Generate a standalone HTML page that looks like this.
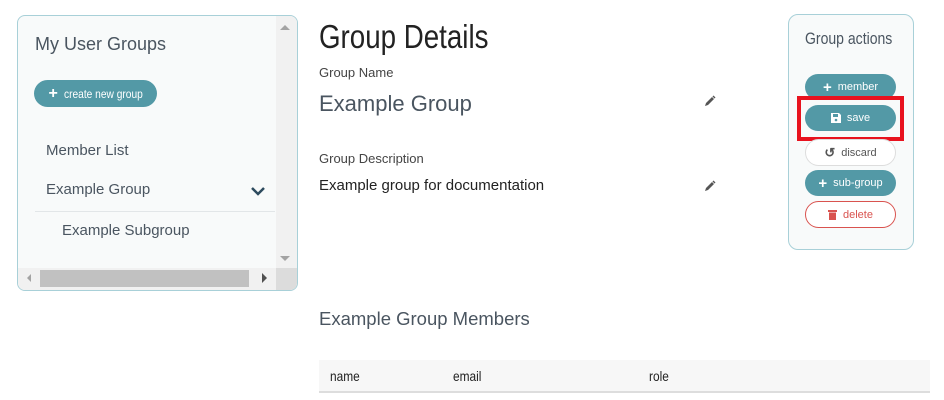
<!DOCTYPE html>
<html><head><style>
body{margin:0;width:944px;height:400px;background:#fff;font-family:"Liberation Sans",sans-serif;position:relative;overflow:hidden;color:#333}
.a{position:absolute;white-space:nowrap}
.panel{position:absolute;left:17px;top:15px;width:279px;height:274px;border:1px solid #a8d0d8;border-radius:8px;background:#f8fafa;overflow:hidden}
.btn{position:absolute;background:#5399a6;color:#fff;border-radius:14px;font-size:11px;display:flex;align-items:center;justify-content:center;gap:6px}
.nar{display:inline-block;transform:scaleX(.85);transform-origin:left center}
</style></head><body>
<div class="panel">
  <div class="a" style="left:17px;top:18px;font-size:18px;color:#4a5560">My User Groups</div>
  <div class="btn" style="left:16px;top:64px;width:123px;height:27px;border-radius:14px"><span style="font-size:16px;font-weight:bold">+</span><span class="nar" style="margin-right:-14px;font-size:12px">create new group</span></div>
  <div class="a" style="left:28px;top:126px;font-size:15px;color:#4a5560">Member List</div>
  <div class="a" style="left:28px;top:165px;font-size:15px;color:#4a5560">Example Group</div>
  <svg class="a" style="left:232px;top:169px" width="16" height="12" viewBox="0 0 16 12"><path d="M2 3l6 6 6-6" stroke="#2d4a5e" stroke-width="2.5" fill="none"/></svg>
  <div class="a" style="left:17px;top:195px;width:240px;height:1px;background:#e2e6e8"></div>
  <div class="a" style="left:44px;top:206px;font-size:15px;color:#4a5560">Example Subgroup</div>
  <div class="a" style="left:258px;top:0;width:21px;height:252px;background:#f1f1f1"></div>
  <div class="a" style="left:262px;top:9px;width:0;height:0;border:5px solid transparent;border-bottom:5px solid #a3a3a3;border-top:0"></div>
  <div class="a" style="left:262px;top:240px;width:0;height:0;border:5px solid transparent;border-top:5px solid #a3a3a3;border-bottom:0"></div>
  <div class="a" style="left:0;top:252px;width:279px;height:22px;background:#f1f1f1"></div>
  <div class="a" style="left:22px;top:254px;width:209px;height:17px;background:#c1c1c1"></div>
  <div class="a" style="left:9px;top:258px;width:0;height:0;border:4px solid transparent;border-right:4px solid #a3a3a3;border-left:0"></div>
  <div class="a" style="left:244px;top:257px;width:0;height:0;border:5px solid transparent;border-left:5px solid #505050;border-right:0"></div>
  <div class="a" style="left:258px;top:252px;width:21px;height:22px;background:#dcdcdc"></div>
</div>

<div class="a" style="left:319px;top:18px;font-size:33px;color:#222"><span class="nar" style="transform:scaleX(.84)">Group Details</span></div>
<div class="a" style="left:319px;top:65px;font-size:13px;color:#444">Group Name</div>
<div class="a" style="left:319px;top:91px;font-size:22px;color:#4a5560">Example Group</div>
<svg class="a" style="left:704px;top:95px" width="12" height="12" viewBox="0 0 12 12"><path d="M1 11l1-3 6-6 2 2-6 6z M8.5 1.5l1-1 2 2-1 1z" fill="#555"/></svg>
<div class="a" style="left:319px;top:151px;font-size:13px;color:#444">Group Description</div>
<div class="a" style="left:319px;top:177px;font-size:15px;color:#222">Example group for documentation</div>
<svg class="a" style="left:704px;top:180px" width="12" height="12" viewBox="0 0 12 12"><path d="M1 11l1-3 6-6 2 2-6 6z M8.5 1.5l1-1 2 2-1 1z" fill="#555"/></svg>

<div class="a" style="left:788px;top:14px;width:124px;height:234px;border:1px solid #a8d0d8;border-radius:10px;background:#f8fafa"></div>
<div class="a" style="left:805px;top:30px;font-size:16.5px;color:#4a5560"><span class="nar">Group actions</span></div>
<div class="btn" style="left:805px;top:74px;width:91px;height:26px"><span style="font-size:15px;font-weight:bold">+</span><span>member</span></div>
<div class="btn" style="left:805px;top:105px;width:91px;height:26px"><svg width="10" height="10" viewBox="0 0 10 10"><path d="M0 0h8l2 2v8H0z" fill="#fff"/><rect x="2" y="1" width="5" height="3" fill="#5399a6"/><circle cx="5" cy="7" r="1.3" fill="#5399a6"/></svg><span>save</span></div>
<div class="a" style="left:797px;top:96px;width:99px;height:37px;border:4px solid #e8121e"></div>
<div class="btn" style="left:805px;top:139px;width:89px;height:25px;background:#fff;border:1px solid #ddd;color:#555"><span style="font-size:13px;font-weight:bold">↺</span><span>discard</span></div>
<div class="btn" style="left:805px;top:170px;width:91px;height:26px"><span style="font-size:15px;font-weight:bold">+</span><span>sub-group</span></div>
<div class="btn" style="left:805px;top:201px;width:89px;height:25px;background:#fff;border:1px solid #d9534f;color:#d9534f"><svg width="9" height="11" viewBox="0 0 9 11"><rect x="0" y="1" width="9" height="2" fill="#d9534f"/><rect x="1" y="3.5" width="7" height="7.5" fill="#d9534f"/></svg><span>delete</span></div>

<div class="a" style="left:319px;top:308px;font-size:18.5px;color:#4a5560">Example Group Members</div>
<div class="a" style="left:319px;top:360px;width:611px;height:31px;background:#f7f7f7;border-bottom:2px solid #ddd"></div>
<div class="a" style="left:330px;top:368px;font-size:14px;color:#222"><span class="nar">name</span></div>
<div class="a" style="left:453px;top:368px;font-size:14px;color:#222"><span class="nar">email</span></div>
<div class="a" style="left:649px;top:368px;font-size:14px;color:#222"><span class="nar">role</span></div>
</body></html>
